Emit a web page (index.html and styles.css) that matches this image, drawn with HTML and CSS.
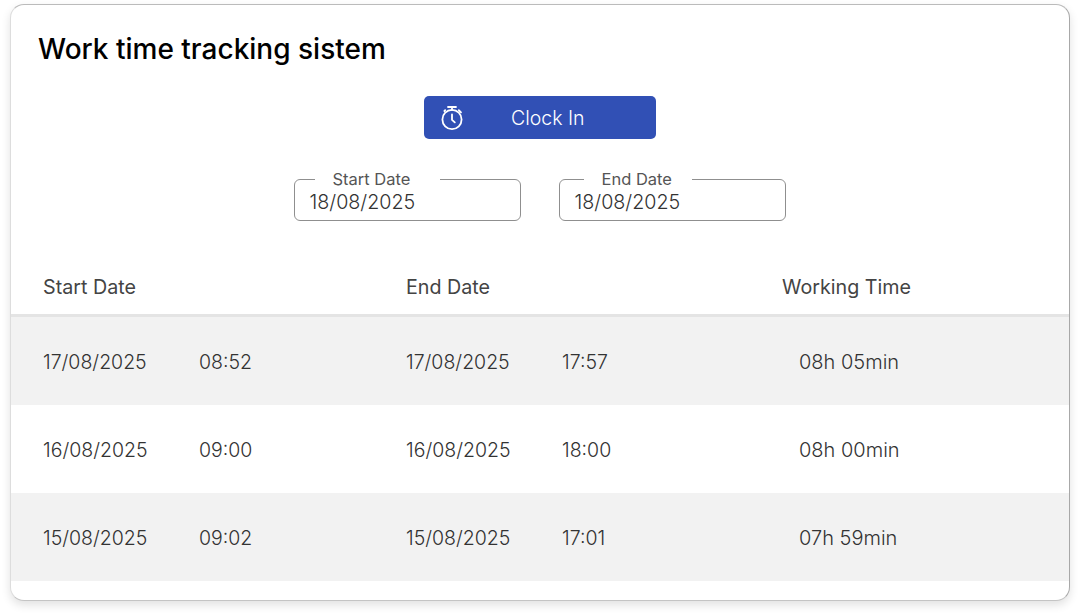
FILE: index.html
```html
<!DOCTYPE html>
<html lang="en">
<head>
<meta charset="utf-8">
<title>Work time tracking sistem</title>
<link rel="stylesheet" href="styles.css">
</head>
<body>
<main class="card">
  <h1 class="title">Work time tracking sistem</h1>
  <div class="action">
    <button class="clock-btn" type="button">
      <svg class="clock-icon" viewBox="0 0 24 26" width="24" height="26" fill="none" stroke="#fff" stroke-width="1.8" stroke-linecap="round" stroke-linejoin="round" aria-hidden="true">
        <circle cx="12" cy="14.5" r="9.6"/>
        <path d="M8 2h8M12 2v3M12 9.5v5.3l2.8 2.6M18.8 5.2l2.2 2.2M5.2 5.2l-.8.8"/>
      </svg>
      <span class="clock-label">Clock In</span>
    </button>
  </div>
  <div class="filters">
    <fieldset class="date-field">
      <legend class="date-legend legend-start">Start Date</legend>
      <span class="date-value">18/08/2025</span>
    </fieldset>
    <fieldset class="date-field">
      <legend class="date-legend legend-end">End Date</legend>
      <span class="date-value">18/08/2025</span>
    </fieldset>
  </div>
  <div class="table">
    <div class="row head">
      <span class="wide">Start Date</span>
      <span class="wide">End Date</span>
      <span>Working Time</span>
    </div>
    <div class="row body shade">
      <span>17/08/2025</span><span>08:52</span><span>17/08/2025</span><span>17:57</span><span class="total">08h 05min</span>
    </div>
    <div class="row body">
      <span>16/08/2025</span><span>09:00</span><span>16/08/2025</span><span>18:00</span><span class="total">08h 00min</span>
    </div>
    <div class="row body shade">
      <span>15/08/2025</span><span>09:02</span><span>15/08/2025</span><span>17:01</span><span class="total">07h 59min</span>
    </div>
  </div>
</main>
</body>
</html>
```
FILE: styles.css
```css
* { box-sizing: border-box; }
html, body { height: 100%; }
body {
  margin: 0;
  background: #fff;
  padding: 4px 10px 15px 10px;
  font-family: Inter, "Liberation Sans", sans-serif;
  color: #444;
  overflow: hidden;
}
.card {
  height: 597px;
  border: 1px solid;
  border-color: #bbb #a8a8a8 #c4c4c4 #ddd;
  border-radius: 14px;
  background: #fff;
  box-shadow: 0 4px 10px rgba(0,0,0,.12);
  overflow: hidden;
  padding-top: 26px;
}
.title {
  margin: 0 0 0 27px;
  font-size: 28px;
  line-height: 36px;
  font-weight: 500;
  color: #000;
}
.action {
  display: flex;
  justify-content: center;
  margin-top: 29px;
}
.clock-btn {
  width: 232px;
  height: 43px;
  display: flex;
  align-items: center;
  padding: 0 0 0 16px;
  border: 0;
  border-radius: 5px;
  background: #3150b5;
  color: #fff;
  font: inherit;
}
.clock-icon { flex: none; }
.clock-label {
  margin-left: 47px;
  font-size: 19.5px;
  font-weight: 300;
}
.filters {
  display: flex;
  justify-content: center;
  gap: 38px;
  margin-top: 40px;
  padding-right: 1px;
}
.date-field {
  width: 227px;
  height: 51px;
  margin: -9px 0 0;
  padding: 3px 15px 0;
  border: 1px solid #8f8f8f;
  border-radius: 6px;
  display: block;
}
.date-legend {
  font-size: 16.5px;
  line-height: 18px;
  color: #555;
}
.legend-start { margin-left: 5px; padding: 0 30px 0 18px; }
.legend-end { margin-left: 9px; padding: 0 20px 0 18px; }
.date-value {
  display: block;
  font-size: 19.7px;
  line-height: 22px;
  font-weight: 300;
  color: #333;
}
.table { margin-top: 40px; }
.row {
  display: grid;
  grid-template-columns: 156px 207px 156px 220px 1fr;
  padding-left: 32px;
  align-items: center;
}
.wide { grid-column: span 2; }
.head {
  height: 56px;
  border-bottom: 3px solid #e4e4e4;
  font-size: 19.7px;
  padding-bottom: 2px;
}
.head .wide:nth-child(2) { grid-column: 3 / span 2; }
.body {
  height: 88px;
  padding-top: 2px;
  font-size: 19.5px;
  font-weight: 300;
  color: #333;
}
.shade { background: #f2f2f2; }
.total { padding-left: 17px; font-size: 20px; }
```
